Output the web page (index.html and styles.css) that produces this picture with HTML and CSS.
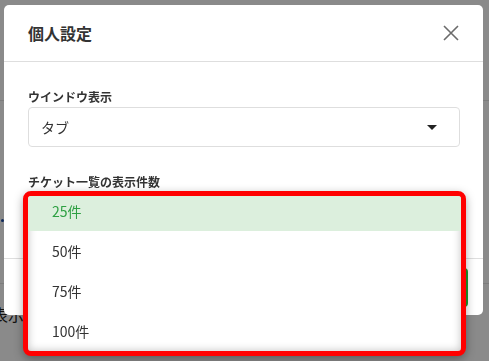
FILE: index.html
```html
<!DOCTYPE html>
<html lang="ja">
<head>
    <meta charset="UTF-8">
    <meta name="viewport" content="width=device-width, initial-scale=1.0">
    <title>個人設定</title>
    <link rel="stylesheet" href="styles.css">
</head>
<body>
    <!-- page behind the modal -->
    <div class="page">
        <div class="page-row"></div>
        <div class="page-row page-row-link"><span class="dot"></span></div>
        <div class="page-row page-row-text">表示件数</div>
    </div>

    <div class="overlay">
        <div class="dialog">
            <div class="dialog-header">
                <h2 class="dialog-title">個人設定</h2>
                <button class="close-btn" aria-label="閉じる">
                    <svg width="16" height="16" viewBox="0 0 16 16">
                        <path d="M1 1 L15 15 M15 1 L1 15" stroke="#6b6b6b" stroke-width="1.6" fill="none"/>
                    </svg>
                </button>
            </div>

            <div class="dialog-body">
                <div class="field">
                    <div class="field-label">ウインドウ表示</div>
                    <div class="select">
                        <span>タブ</span>
                        <span class="caret"></span>
                    </div>
                </div>

                <div class="field field-open">
                    <div class="field-label">チケット一覧の表示件数</div>
                    <!-- select is covered by the open menu -->
                    <div class="select">
                        <span></span>
                        <span class="caret"></span>
                    </div>
                    <div class="menu">
                        <ul class="menu-list">
                            <li class="menu-item selected">25件</li>
                            <li class="menu-item">50件</li>
                            <li class="menu-item">75件</li>
                            <li class="menu-item">100件</li>
                        </ul>
                    </div>
                </div>
            </div>

            <div class="dialog-footer">
                <button class="save-btn"></button>
            </div>
        </div>
    </div>
</body>
</html>
```

FILE: styles.css
```css
* {
    margin: 0;
    padding: 0;
    box-sizing: border-box;
    font-family: 'Noto Sans CJK JP', 'Noto Sans', sans-serif;
}

body {
    background-color: #fff;
    width: 489px;
    height: 361px;
    overflow: hidden;
}

.page {
    padding-top: 100px;
}

.page-row {
    height: 1px;
    background-color: #e6e6e6;
}

.page-row-link {
    height: 120px;
    background: none;
    position: relative;
}

.dot {
    position: absolute;
    left: 1px;
    top: 118px;
    width: 3px;
    height: 3px;
    border-radius: 50%;
    background-color: #1d4fa8;
}

.page-row-text {
    height: auto;
    background: none;
    border-top: 1px solid #e6e6e6;
    margin-top: 62px;
    padding-top: 18px;
    margin-left: -8px;
    font-size: 16px;
    color: #222;
}

.overlay {
    position: fixed;
    inset: 0;
    background-color: rgba(0, 0, 0, 0.46);
    padding: 5px 6px 0 4px;
}

.dialog {
    position: relative;
    background-color: white;
    border-radius: 5px;
    height: 310px;
    display: flex;
    flex-direction: column;
}

.dialog-header {
    display: flex;
    justify-content: space-between;
    align-items: center;
    height: 57px;
    padding: 0 22px 0 24px;
    border-bottom: 1px solid #dedede;
}

.dialog-title {
    font-size: 16px;
    font-weight: bold;
    color: #333;
}

.close-btn {
    background: none;
    border: none;
    width: 20px;
    height: 20px;
    display: flex;
    align-items: center;
    justify-content: center;
    cursor: pointer;
}

.dialog-body {
    flex: 1;
    padding: 26px 23px 0 24px;
}

.field {
    margin-bottom: 26px;
}

.field-open {
    position: relative;
}

.field-label {
    font-size: 12px;
    font-weight: bold;
    color: #333;
    line-height: 18px;
    margin-bottom: 1px;
}

.select {
    display: flex;
    justify-content: space-between;
    align-items: center;
    height: 40px;
    padding: 0 22px 0 12px;
    border: 1px solid #dedede;
    border-radius: 4px;
    font-size: 14px;
    color: #333;
}

.caret {
    width: 0;
    height: 0;
    border-left: 5px solid transparent;
    border-right: 5px solid transparent;
    border-top: 5px solid #222;
}

.menu {
    position: absolute;
    top: 18px;
    left: -5px;
    right: -6px;
    height: 165px;
    background-color: white;
    border: 5px solid #ff0000;
    border-radius: 8px;
    overflow: hidden;
    box-shadow: 0 3px 10px rgba(0, 0, 0, 0.35), inset 0 0 8px rgba(0, 0, 0, 0.25);
    z-index: 2;
}

.menu-list {
    list-style: none;
    margin-top: -5px;
}

.menu-item {
    height: 40px;
    line-height: 40px;
    padding-left: 24px;
    font-size: 14px;
    color: #333;
}

.menu-item.selected {
    background-color: #dcefdd;
    color: #2ea043;
}

.dialog-footer {
    display: flex;
    justify-content: flex-end;
    align-items: center;
    height: 57px;
    padding: 0 15px;
    border-top: 1px solid #dedede;
}

.save-btn {
    background-color: #1e9a2e;
    border: none;
    height: 39px;
    width: 60px;
    border-radius: 4px;
}
```
